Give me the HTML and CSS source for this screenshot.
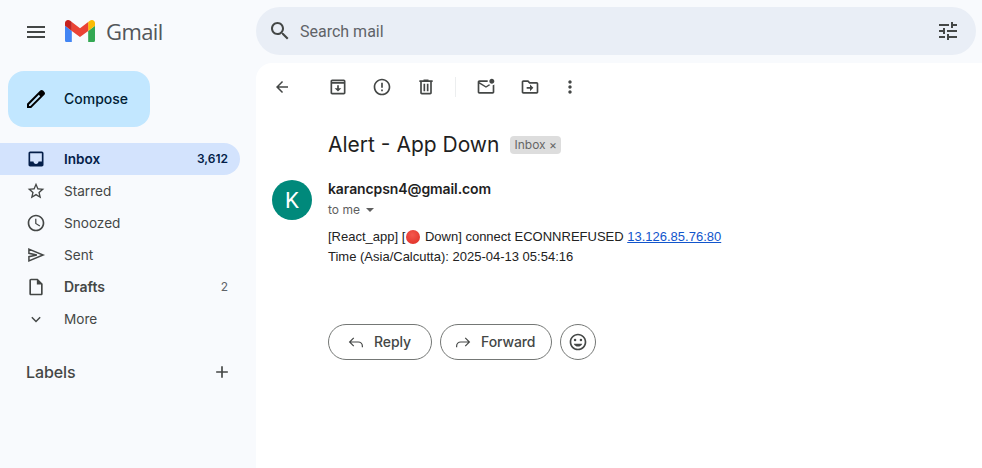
FILE: index.html
```html
<!DOCTYPE html>
<html lang="en">
<head>
<meta charset="utf-8">
<title>Alert - App Down - Gmail</title>
<link rel="stylesheet" href="styles.css">
</head>
<body>
<div class="app">
  <aside class="sidebar">
    <div class="brand">
      <svg class="icon menu" viewBox="0 0 24 24"><path d="M3 18h18v-2H3v2zm0-5h18v-2H3v2zm0-7v2h18V6H3z"/></svg>
      <svg class="logo" viewBox="52 42 88 66"><path fill="#4285f4" d="M58 108h14V74L52 59v43c0 3.32 2.69 6 6 6"/><path fill="#34a853" d="M120 108h14c3.32 0 6-2.69 6-6V59l-20 15"/><path fill="#fbbc04" d="M120 48v26l20-15v-8c0-7.42-8.47-11.65-14.4-7.2"/><path fill="#ea4335" d="M72 74V48l24 18 24-18v26L96 92"/><path fill="#c5221f" d="M52 51v8l20 15V48l-5.6-4.2c-5.94-4.45-14.4-.22-14.4 7.2"/></svg>
      <span class="wordmark">Gmail</span>
    </div>
    <button class="compose">
      <svg class="icon pen" viewBox="0 0 24 24"><path d="M20.41 4.94l-1.35-1.35c-.78-.78-2.05-.78-2.83 0L3 16.82V21h4.18L20.41 7.77c.79-.78.79-2.05 0-2.83zm-14 14.12L5 19v-1.36l9.82-9.82 1.41 1.41-9.82 9.83z"/></svg>
      <span class="compose-label">Compose</span>
    </button>
    <nav class="nav">
      <a class="nav-row active">
        <svg class="icon" viewBox="0 0 24 24"><path d="M19 3H4.99C3.88 3 3.01 3.89 3.01 5L3 19c0 1.1.88 2 1.99 2H19c1.1 0 2-.9 2-2V5c0-1.11-.9-2-2-2zm0 12h-4c0 1.66-1.35 3-3 3s-3-1.34-3-3H4.99V5H19v10z"/></svg>
        <span class="nav-label">Inbox</span><span class="count">3,612</span>
      </a>
      <a class="nav-row">
        <svg class="icon" viewBox="0 0 24 24"><path d="M22 9.24l-7.19-.62L12 2 9.19 8.63 2 9.24l5.46 4.73L5.82 21 12 17.27 18.18 21l-1.63-7.03L22 9.24zM12 15.4l-3.76 2.27 1-4.28-3.32-2.88 4.38-.38L12 6.1l1.71 4.04 4.38.38-3.32 2.88 1 4.28L12 15.4z"/></svg>
        <span class="nav-label">Starred</span>
      </a>
      <a class="nav-row">
        <svg class="icon" viewBox="0 0 24 24"><path d="M11.99 2C6.47 2 2 6.48 2 12s4.47 10 9.99 10C17.52 22 22 17.52 22 12S17.52 2 11.99 2zM12 20c-4.42 0-8-3.58-8-8s3.58-8 8-8 8 3.58 8 8-3.58 8-8 8zm.5-13H11v6l5.25 3.15.75-1.23-4.5-2.67z"/></svg>
        <span class="nav-label">Snoozed</span>
      </a>
      <a class="nav-row">
        <svg class="icon line" viewBox="0 0 24 24"><path d="M3.500 5 20.500 12 3.500 19V14L13 12 3.500 10z"/></svg>
        <span class="nav-label">Sent</span>
      </a>
      <a class="nav-row bold">
        <svg class="icon" viewBox="0 0 24 24"><path d="M14 2H6c-1.1 0-1.99.9-1.99 2L4 20c0 1.1.89 2 1.99 2H18c1.1 0 2-.9 2-2V8l-6-6zM6 20V4h7v5h5v11H6z"/></svg>
        <span class="nav-label">Drafts</span><span class="count light">2</span>
      </a>
      <a class="nav-row">
        <svg class="icon line" viewBox="0 0 24 24"><path d="M7 10l5 5 5-5"/></svg>
        <span class="nav-label">More</span>
      </a>
    </nav>
    <div class="labels">
      <span>Labels</span>
      <svg class="icon" viewBox="0 0 24 24"><path d="M19 13h-6v6h-2v-6H5v-2h6V5h2v6h6v2z"/></svg>
    </div>
  </aside>
  <div class="main">
    <div class="search">
      <svg class="icon search-icon" viewBox="0 0 24 24"><path d="M15.5 14h-.79l-.28-.27C15.41 12.59 16 11.11 16 9.5 16 5.91 13.09 3 9.5 3S3 5.91 3 9.5 5.91 16 9.5 16c1.61 0 3.09-.59 4.23-1.57l.27.28v.79l5 4.99L20.49 19l-4.99-5zm-6 0C7.01 14 5 11.99 5 9.5S7.01 5 9.5 5 14 7.01 14 9.5 11.99 14 9.5 14z"/></svg>
      <span class="search-text">Search mail</span>
      <svg class="icon search-icon" viewBox="0 0 24 24"><path d="M3 17v2h6v-2H3zM3 5v2h10V5H3zm10 16v-2h8v-2h-8v-2h-2v6h2zM7 9v2H3v2h4v2h2V9H7zm14 4v-2H11v2h10zm-6-4h2V7h4V5h-4V3h-2v6z"/></svg>
    </div>
    <section class="panel">
      <div class="toolbar">
        <svg class="tool back" viewBox="0 0 24 24"><path d="M20 11H7.83l5.59-5.59L12 4l-8 8 8 8 1.41-1.41L7.83 13H20v-2z"/></svg>
        <svg class="tool" viewBox="0 0 24 24"><path d="M19 3H5c-1.1 0-2 .9-2 2v14c0 1.1.9 2 2 2h14c1.1 0 2-.9 2-2V5c0-1.1-.9-2-2-2zm0 16H5V8h14v11zM5 6V5h14v1H5z"/><path d="M12 17.5 8 13.5h3V10h2v3.5h3z"/></svg>
        <svg class="tool" viewBox="0 0 24 24"><path d="M11 15h2v2h-2zm0-8h2v6h-2zm.99-5C6.47 2 2 6.48 2 12s4.47 10 9.99 10C17.52 22 22 17.52 22 12S17.52 2 11.99 2zM12 20c-4.42 0-8-3.58-8-8s3.58-8 8-8 8 3.58 8 8-3.58 8-8 8z"/></svg>
        <svg class="tool trash" viewBox="0 0 24 24"><path d="M15 4V3H9v1H4v2h1v13c0 1.1.9 2 2 2h10c1.1 0 2-.9 2-2V6h1V4h-5zm2 15H7V6h10v13zM9 8h2v9H9zm4 0h2v9h-2z"/></svg>
        <span class="divider"></span>
        <svg class="tool" viewBox="0 0 24 24"><path d="M22 8.98V18c0 1.1-.9 2-2 2H4c-1.1 0-2-.9-2-2V6c0-1.1.9-2 2-2h10.1c-.06.32-.1.66-.1 1s.04.68.1 1H4l8 5 3.67-2.29c.47.43 1.02.76 1.63.98L12 13 4 8v10h16V9.9c.74-.15 1.42-.48 2-.92zM16 5c0 1.66 1.34 3 3 3s3-1.34 3-3-1.34-3-3-3-3 1.34-3 3z"/></svg>
        <svg class="tool tight" viewBox="0 0 24 24"><path d="M20 6h-8l-2-2H4c-1.1 0-2 .9-2 2v12c0 1.1.9 2 2 2h16c1.1 0 2-.9 2-2V8c0-1.1-.9-2-2-2zm0 12H4V6h5.17l2 2H20v10zm-8-4H8v-2h4V9l4 4-4 4v-3z"/></svg>
        <svg class="tool" viewBox="0 0 24 24"><path d="M12 8c1.1 0 2-.9 2-2s-.9-2-2-2-2 .9-2 2 .9 2 2 2zm0 2c-1.1 0-2 .9-2 2s.9 2 2 2 2-.9 2-2-.9-2-2-2zm0 6c-1.1 0-2 .9-2 2s.9 2 2 2 2-.9 2-2-.9-2-2-2z"/></svg>
      </div>
      <div class="subject">
        <h1>Alert - App Down</h1>
        <span class="chip">Inbox <i>×</i></span>
      </div>
      <div class="message">
        <div class="avatar">K</div>
        <div class="content">
          <div class="sender">karancpsn4@gmail.com</div>
          <div class="to">to me <span class="caret"></span></div>
          <div class="body-text">
            <div>[React_app] [<span class="emoji"></span> Down] connect ECONNREFUSED <a class="link">13.126.85.76:80</a></div>
            <div>Time (Asia/Calcutta): 2025-04-13 05:54:16</div>
          </div>
          <div class="actions">
            <button class="pill reply">
              <svg class="pill-icon" viewBox="0 0 24 24"><path d="M9 6.5 3.5 12 9 17.5M3.5 12H15c3 0 5.5 2.4 5.5 5.5V19"/></svg>
              <span class="pill-label">Reply</span>
            </button>
            <button class="pill forward">
              <svg class="pill-icon" viewBox="0 0 24 24"><path d="M15 6.5 20.5 12 15 17.5M20.500 12H9c-3 0-5.500 2.400-5.500 5.500V19"/></svg>
              <span class="pill-label">Forward</span>
            </button>
            <button class="pill smile">
              <svg class="icon" viewBox="0 0 24 24"><path d="M11.99 2C6.47 2 2 6.48 2 12s4.47 10 9.99 10C17.52 22 22 17.52 22 12S17.52 2 11.99 2zM12 20c-4.42 0-8-3.58-8-8s3.58-8 8-8 8 3.58 8 8-3.58 8-8 8z"/><circle cx="8.500" cy="9.500" r="1.500"/><circle cx="15.500" cy="9.500" r="1.500"/><path d="M12 17.500c2.330 0 4.310-1.460 5.110-3.500H6.890c.8 2.040 2.780 3.500 5.110 3.500z"/></svg>
            </button>
          </div>
        </div>
      </div>
    </section>
  </div>
</div>
</body>
</html>
```
FILE: styles.css
```css
* { box-sizing: border-box; }
html, body { margin: 0; height: 100%; overflow: hidden; }
body { background: #f8fafd; font-family: "Inter", "Liberation Sans", sans-serif; color: #1f1f1f; }
.app { display: grid; grid-template-columns: 256px 1fr; height: 468px; }

.icon { width: 20px; height: 20px; fill: #444746; flex: none; display: block; }
.icon.line { fill: none; stroke: #444746; stroke-width: 1.8; }

.sidebar { display: flex; flex-direction: column; min-width: 0; }
.brand { display: flex; align-items: center; height: 63px; padding-left: 24px; }
.menu { width: 24px; height: 24px; }
.logo { width: 30px; height: 22.5px; margin-left: 17px; margin-top: -1px; }
.wordmark { margin-left: 11px; margin-top: -1px; font-family: "Open Sans", sans-serif; font-size: 22px; color: #53565a; letter-spacing: -0.6px; }

.compose { display: flex; align-items: center; width: 142px; height: 56px; margin: 8px 0 16px 8px; padding: 0 0 0 16px; border: 0; border-radius: 16px; background: #c2e7ff; font: 500 14px "Inter", sans-serif; color: #001d35; }
.compose-label { padding-bottom: 2px; }
.icon.pen { width: 24px; height: 24px; fill: #000; margin-right: 16px; }

.nav { display: flex; flex-direction: column; width: 240px; }
.nav-row { display: flex; align-items: center; height: 32px; padding: 0 12px 0 26px; font-size: 13.6px; color: #444746; border-radius: 0 16px 16px 0; }
.nav-row .icon { margin-right: 18px; }
.nav-label { flex: 1; padding-bottom: 1px; }
.active { background: #d3e3fd; color: #041e49; font-weight: 600; }
.active .icon { fill: #041e49; }
.bold { font-size: 14px; font-weight: 600; color: #444746; }
.count { font-size: 12px; padding-bottom: 1px; }
.count.light { font-weight: 400; color: #5f6368; }

.labels { display: flex; align-items: center; justify-content: space-between; width: 232px; margin-top: 27px; padding-left: 26px; font-size: 16px; font-weight: 500; color: #444746; letter-spacing: -0.1px; }

.main { display: flex; flex-direction: column; min-width: 0; }
.search { display: flex; align-items: center; width: 720px; height: 48px; margin-top: 7px; padding: 0 16px 0 12px; border-radius: 24px; background: #e9eef6; }
.icon.search-icon { width: 24px; height: 24px; }
.search-text { flex: 1; margin-left: 8px; font: 16px "Roboto", sans-serif; color: #5f6368; }

.panel { flex: 1; margin-top: 8px; background: #fff; border-top-left-radius: 16px; }
.toolbar { display: flex; align-items: center; height: 48px; padding-left: 17px; }
.tool { width: 20px; height: 20px; fill: #444746; flex: none; margin-right: 24px; }
.tool.back { width: 18px; height: 18px; margin-right: 37px; }
.tool.trash { margin-right: 19px; }
.divider { width: 1px; height: 20px; background: #eceeef; margin-right: 20px; }
.tool.tight { margin-right: 20px; }

.subject { display: flex; align-items: center; height: 40px; margin-top: 14px; padding-left: 72px; }
.subject h1 { margin: 0 0 1px; font: 400 21px "Inter", sans-serif; color: #1f1f1f; }
.chip { margin-left: 11px; height: 18px; padding: 0 4px; border-radius: 4px; background: #ddd; font: 12px/18px "Inter", sans-serif; color: #666; }
.chip i { font-style: normal; }

.message { display: flex; margin-top: 15px; padding-left: 16px; }
.avatar { display: flex; align-items: center; justify-content: center; width: 40px; height: 40px; border-radius: 50%; background: #00897b; color: #fff; font: 400 22px "Roboto", sans-serif; }
.content { margin-left: 16px; }
.sender { font: 600 14px/20px "Inter", sans-serif; color: #1f1f1f; margin-top: -1px; letter-spacing: -0.1px; }
.to { display: flex; align-items: center; font: 12px/16px "Inter", sans-serif; color: #5e5e5e; margin-top: 3px; }
.caret { width: 0; height: 0; margin-left: 6px; border: 4px solid transparent; border-top: 4px solid #5e5e5e; border-bottom: 0; }
.body-text { margin-top: 9px; font: 13px/20px "Liberation Sans", Arial, sans-serif; color: #222; }
.emoji { display: inline-block; width: 14px; height: 14px; border-radius: 50%; background: radial-gradient(circle at 45% 35%, #f4574d, #dd2c23); vertical-align: -3px; margin: 0 1px; }
.link { color: #1155cc; text-decoration: underline; }

.actions { display: flex; gap: 8px; margin-top: 57px; }
.pill { display: flex; align-items: center; height: 36px; padding: 0; border: 1px solid #747775; border-radius: 18px; background: #fff; font: 500 14px "Inter", sans-serif; color: #444746; }
.pill-label { padding-bottom: 1px; letter-spacing: -0.1px; }
.pill-icon { width: 18px; height: 18px; fill: none; stroke: #444746; stroke-width: 1.6; flex: none; }
.reply { width: 104px; padding-left: 18px; gap: 9px; }
.forward { width: 112px; padding-left: 13px; gap: 9px; }
.smile { width: 36px; justify-content: center; }
```
